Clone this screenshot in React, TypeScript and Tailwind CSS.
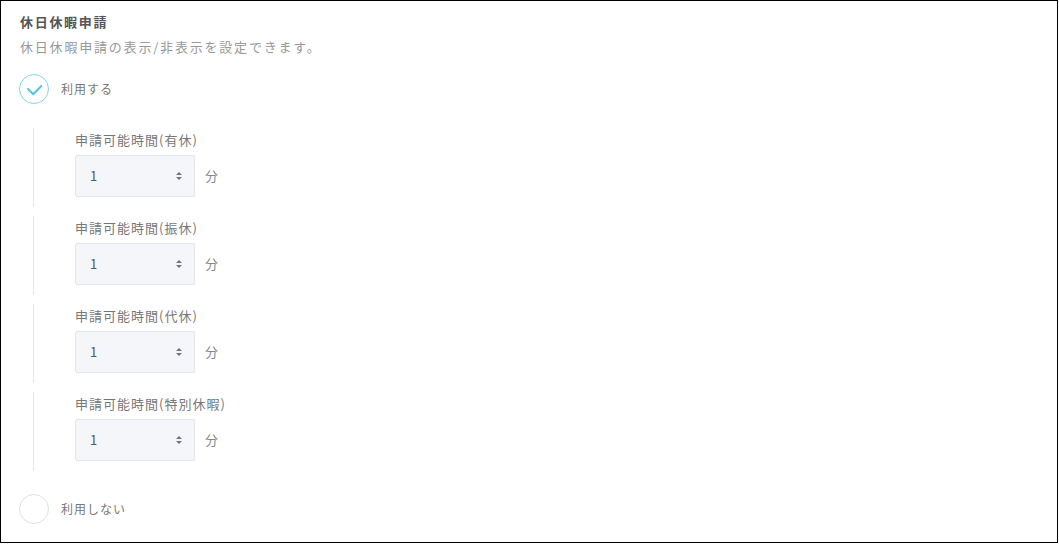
import React from 'react';

const FONT = { fontFamily: '"Noto Sans CJK JP", "Noto Sans", sans-serif' };

const GROUPS = ['有休', '振休', '代休', '特別休暇'];

function SelectArrows() {
  return (
    <svg aria-hidden className="pointer-events-none absolute right-[11px] top-1/2 -translate-y-1/2" width="8" height="10" viewBox="0 0 8 10">
      <path d="M4 1 L7 4 L1 4 Z" fill="#6b7280" />
      <path d="M4 9 L7 6 L1 6 Z" fill="#6b7280" />
    </svg>
  );
}

function MinuteSelect() {
  return (
    <div className="flex items-center">
      <div className="relative h-[42px] w-[120px] rounded-[2px] border border-[#e3e6ec] bg-[#f5f6fa]">
        <select
          className="h-full w-full appearance-none bg-transparent pl-[14px] text-[13px] text-[#555] outline-none"
          defaultValue="1"
          style={FONT}
        >
          <option value="1">1</option>
          <option value="5">5</option>
          <option value="10">10</option>
          <option value="15">15</option>
          <option value="30">30</option>
        </select>
        <SelectArrows />
      </div>
      <span className="ml-[10px] text-[13px] text-[#888]">分</span>
    </div>
  );
}

function RadioRow({ checked, label }: { checked: boolean; label: string }) {
  return (
    <label className="flex h-[30px] items-center gap-[12px]">
      <span
        className={`flex h-[30px] w-[30px] shrink-0 items-center justify-center rounded-full border ${checked ? 'border-[#7fd4e4]' : 'border-[#e0e0e0]'}`}
      >
        {checked ? (
          <svg width="30" height="30" viewBox="0 0 30 30" className="-m-px">
            <polyline
              points="9,15 14.2,20.2 22.4,12"
              fill="none"
              stroke="#52c5dc"
              strokeWidth="2"
              strokeLinecap="round"
              strokeLinejoin="round"
            />
          </svg>
        ) : null}
      </span>
      <span className="text-[12px] tracking-[1px] text-[#777]">{label}</span>
    </label>
  );
}

export default function App() {
  return (
    <div className="bg-white" style={FONT}>
      <div className="h-[543px] w-[1058px] border border-black pl-[18px] pt-[11px]">
        <h2 className="pl-px text-[13px] font-bold leading-5 tracking-[1.7px] text-[#555]">休日休暇申請</h2>
        <p className="mt-[5px] pl-px text-[13px] leading-5 tracking-[1.8px] text-[#999]">
          休日休暇申請の表示/非表示を設定できます。
        </p>
        <div className="mt-[17px]">
          <RadioRow checked label="利用する" />
        </div>
        <div className="ml-[14px] mt-[24px]">
          {GROUPS.map((g) => (
            <div className="mb-[9px] h-[79px] border-l border-[#e6e6e6] pl-[41px] pt-[2px]" key={g}>
              <div className="text-[13px] leading-5 tracking-[1px] text-[#777]">申請可能時間({g})</div>
              <div className="mt-[5px]">
                <MinuteSelect />
              </div>
            </div>
          ))}
        </div>
        <div className="mt-[23px]">
          <RadioRow checked={false} label="利用しない" />
        </div>
      </div>
    </div>
  );
}
